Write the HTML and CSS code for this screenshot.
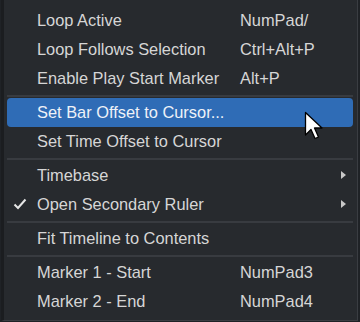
FILE: index.html
```
<!DOCTYPE html>
<html>
<head>
<meta charset="utf-8">
<link rel="stylesheet" href="styles.css">
</head>
<body>
<div class="menu">
  <div class="item"><span class="label">Loop Active</span><span class="key">NumPad/</span></div>
  <div class="item"><span class="label">Loop Follows Selection</span><span class="key">Ctrl+Alt+P</span></div>
  <div class="item"><span class="label">Enable Play Start Marker</span><span class="key">Alt+P</span></div>
  <div class="sep"></div>
  <div class="item active"><span class="label">Set Bar Offset to Cursor...</span><span class="key"></span></div>
  <div class="item"><span class="label">Set Time Offset to Cursor</span><span class="key"></span></div>
  <div class="sep"></div>
  <div class="item"><span class="label">Timebase</span><span class="key"></span><span class="arrow"></span></div>
  <div class="item"><span class="check"><svg width="14" height="12" viewBox="0 0 14 12"><path d="M1.5 6.5 L5 10 L12.5 1.5" fill="none" stroke="#e6e6e6" stroke-width="2"/></svg></span><span class="label">Open Secondary Ruler</span><span class="key"></span><span class="arrow"></span></div>
  <div class="sep"></div>
  <div class="item"><span class="label">Fit Timeline to Contents</span><span class="key"></span></div>
  <div class="sep"></div>
  <div class="item"><span class="label">Marker 1 - Start</span><span class="key">NumPad3</span></div>
  <div class="item"><span class="label">Marker 2 - End</span><span class="key">NumPad4</span></div>
</div>
<svg class="cursor" width="24" height="32" viewBox="0 0 24 32">
  <path d="M1.5 1.5 L1.5 24 L7 18.5 L11 27.5 L14.5 26 L10.5 17 L18 17 Z" fill="#ffffff" stroke="#000000" stroke-width="1.3" stroke-linejoin="round"/>
</svg>
</body>
</html>
```
FILE: styles.css
```
html, body {
  margin: 0;
  padding: 0;
  background: #1f2226;
  width: 360px;
  height: 322px;
  overflow: hidden;
}
.menu {
  position: relative;
  box-sizing: border-box;
  width: 357px;
  height: 321px;
  margin-left: 1px;
  background: #272a2e;
  border-left: 3px solid #1b1d20;
  border-right: 1px solid #3a3d42;
  border-bottom: 1px solid #3a3d42;
  padding: 6px 4px 0 3px;
  font-family: "Liberation Sans", Arial, sans-serif;
  font-size: 16.4px;
  color: #d6d6d6;
}
.item {
  position: relative;
  display: flex;
  align-items: center;
  height: 29px;
  padding-left: 30px;
  border-radius: 4px;
}
.item.active {
  background: #2f6cb6;
  color: #eef2f8;
}
.label {
  width: 203px;
  white-space: nowrap;
}
.key {
  white-space: nowrap;
}
.check {
  position: absolute;
  left: 6px;
  top: 8px;
  line-height: 0;
}
.arrow {
  position: absolute;
  right: 7px;
  top: 10px;
  width: 0;
  height: 0;
  border-top: 4.5px solid transparent;
  border-bottom: 4.5px solid transparent;
  border-left: 5px solid #c8c8c8;
}
.sep {
  height: 5px;
  display: flex;
  align-items: center;
}
.sep::before {
  content: "";
  display: block;
  width: 100%;
  height: 2px;
  background: #383b40;
}
.cursor {
  position: absolute;
  left: 304px;
  top: 111px;
}
```
